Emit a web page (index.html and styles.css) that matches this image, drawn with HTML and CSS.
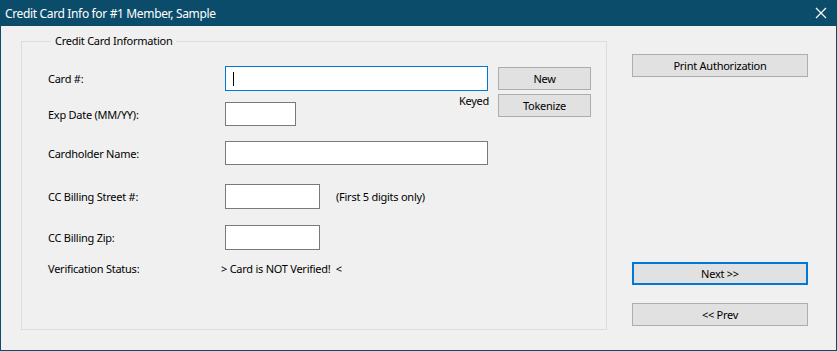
FILE: index.html
```html
<!DOCTYPE html>
<html lang="en">
<head>
  <meta charset="UTF-8" />
  <title>Credit Card Info</title>
  <link rel="stylesheet" href="styles.css">
</head>
<body>
  <div class="window">
    <header class="titlebar">
      <span class="title">Credit Card Info for #1 Member, Sample</span>
      <span class="close">
        <svg width="12" height="12" viewBox="0 0 12 12"><path d="M1 1 L11 11 M11 1 L1 11" stroke="white" stroke-width="1.2" fill="none"/></svg>
      </span>
    </header>

    <main class="dialog">
      <fieldset class="group">
        <legend>Credit Card Information</legend>
        <div class="form-grid">
          <label class="lbl r-card">Card #:</label>
          <input type="text" class="box box-focus r-card w-long" value="">
          <div class="side-buttons">
            <button class="btn btn-small">New</button>
            <button class="btn btn-small">Tokenize</button>
          </div>
          <span class="keyed">Keyed</span>

          <label class="lbl r-exp">Exp Date (MM/YY):</label>
          <input type="text" class="box r-exp w-short">

          <label class="lbl r-name">Cardholder Name:</label>
          <input type="text" class="box r-name w-long">

          <label class="lbl r-street">CC Billing Street #:</label>
          <div class="r-street field-note">
            <input type="text" class="box w-mid">
            <span class="note">(First 5 digits only)</span>
          </div>

          <label class="lbl r-zip">CC Billing Zip:</label>
          <input type="text" class="box r-zip w-mid">

          <label class="lbl r-status">Verification Status:</label>
          <span class="status r-status">&gt; Card is NOT Verified!&nbsp; &lt;</span>
        </div>
      </fieldset>

      <aside class="actions">
        <button class="btn btn-wide">Print Authorization</button>
        <div class="nav-buttons">
          <button class="btn btn-wide btn-default">Next &gt;&gt;</button>
          <button class="btn btn-wide">&lt;&lt; Prev</button>
        </div>
      </aside>
    </main>
  </div>
</body>
</html>
```

FILE: styles.css
```css
* {
  box-sizing: border-box;
  margin: 0;
  padding: 0;
}

html, body {
  width: 837px;
  height: 351px;
  overflow: hidden;
}

body {
  font-family: 'Noto Sans', 'Liberation Sans', sans-serif;
  font-size: 11px;
  letter-spacing: -0.25px;
  color: #000;
  background: #f0f0f0;
}

.window {
  width: 837px;
  height: 351px;
  border: 1px solid #0b4c6b;
  border-top: none;
  display: flex;
  flex-direction: column;
}

.titlebar {
  height: 26px;
  margin: 0 -1px;
  background-color: #0b4c6b;
  color: white;
  display: flex;
  align-items: center;
  justify-content: space-between;
  padding: 0 10px 0 5px;
}

.title {
  font-size: 12px;
  letter-spacing: -0.35px;
}

.close {
  display: flex;
}

.dialog {
  flex: 1;
  display: flex;
  padding: 7px 0 0 20px;
}

.group {
  width: 586px;
  height: 297px;
  border: 1px solid #dcdcdc;
  padding: 0 0 0 26px;
}

.group legend {
  margin-left: 3px;
  padding: 0 4px 0 4px;
  line-height: 16px;
}

.form-grid {
  display: grid;
  grid-template-columns: 177px 263px 103px;
  grid-template-rows: 25px 11px 24px 15px 24px 19px 25px 16px 25px 10px 16px;
  margin-top: 17px;
}

.lbl {
  grid-column: 1;
  align-self: center;
}

.r-card { grid-row: 1; }
.r-exp { grid-row: 3; }
.r-name { grid-row: 5; }
.r-street { grid-row: 7; }
.r-zip { grid-row: 9; }
.r-status { grid-row: 11; }

.box {
  grid-column: 2;
  height: 100%;
  border: 1px solid #7a7a7a;
  background: white;
  font: inherit;
  padding: 0 6px;
  outline: none;
}

.box-focus {
  border-color: #0078d7;
}

.w-long { width: 263px; }
.w-short { width: 71px; justify-self: start; }
.w-mid { width: 95px; }

.field-note {
  grid-column: 2 / 4;
  display: flex;
  align-items: center;
  gap: 16px;
}

.field-note .box {
  height: 25px;
}

.keyed {
  grid-column: 2;
  grid-row: 2 / 4;
  justify-self: end;
  align-self: start;
  margin-top: 2px;
  margin-right: -1px;
  line-height: 16px;
}

.side-buttons {
  grid-column: 3;
  grid-row: 1 / 4;
  justify-self: end;
  display: flex;
  flex-direction: column;
  gap: 4px;
  padding-top: 1px;
}

.status {
  grid-column: 2;
  align-self: center;
  margin-left: -4px;
}

.btn {
  font: inherit;
  letter-spacing: inherit;
  color: #000;
  background-color: #e1e1e1;
  border: 1px solid #adadad;
}

.btn-small {
  width: 93px;
  height: 23px;
}

.actions {
  margin-left: 25px;
  padding-top: 21px;
  display: flex;
  flex-direction: column;
}

.btn-wide {
  width: 176px;
  height: 23px;
}

.btn-default {
  border: 2px solid #0078d7;
}

.nav-buttons {
  display: flex;
  flex-direction: column;
  gap: 18px;
  margin-top: 185px;
}

/* caret stand-in for the focused card field */
.r-card.box-focus {
  background: white linear-gradient(#000, #000) no-repeat 7px 5px / 1px 14px;
}
```
